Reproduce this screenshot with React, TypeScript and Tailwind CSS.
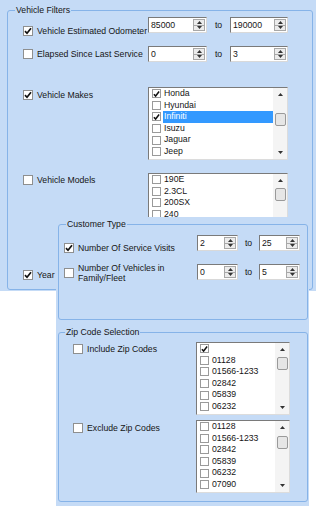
import React from 'react';

const BG = 'bg-[#c5dbf6]';

function Check({ on, small }: { on?: boolean; small?: boolean }) {
  return (
    <span
      className={
        small
          ? 'flex items-center justify-center shrink-0 w-[9px] h-[9px] bg-white border border-[#9a9a9a]'
          : 'flex items-center justify-center shrink-0 w-[10px] h-[10px] bg-white border border-[#8e8f8f]'
      }
    >
      {on && (
        <svg width="8" height="8" viewBox="0 0 8 8">
          <path d="M1 4.2 L3 6.3 L7 1.2" fill="none" stroke="#111" strokeWidth="1.7" />
        </svg>
      )}
    </span>
  );
}

function Tri({ up }: { up?: boolean }) {
  return (
    <svg width="5" height="3" viewBox="0 0 5 3">
      <path d={up ? 'M0 3 L2.5 0 L5 3 Z' : 'M0 0 L2.5 3 L5 0 Z'} fill="#333" />
    </svg>
  );
}

function Spin({ value, w }: { value: string; w: string }) {
  return (
    <div
      className={`flex h-[16px] bg-white border border-t-[#7a7a7a] border-l-[#7a7a7a] border-r-[#d9d9d9] border-b-[#d9d9d9] ${w}`}
    >
      <span className="flex-1 pl-[2px] leading-[14px]">{value}</span>
      <div className="flex flex-col w-[12px] my-[1px] mr-[1px]">
        <span className="flex-1 flex items-center justify-center bg-[#ececec] border border-[#a8a8a8]">
          <Tri up />
        </span>
        <span className="flex-1 flex items-center justify-center bg-[#ececec] border border-t-0 border-[#a8a8a8]">
          <Tri />
        </span>
      </div>
    </div>
  );
}

function ListBox({
  items,
  w,
  thumbTop,
  checked = [],
  selected = -1,
}: {
  items: string[];
  w: string;
  thumbTop: string;
  checked?: number[];
  selected?: number;
}) {
  return (
    <div
      className={`flex h-[73px] bg-white border border-t-[#7a7a7a] border-l-[#7a7a7a] border-r-[#dcdcdc] border-b-[#dcdcdc] overflow-hidden ${w}`}
    >
      <div className="flex-1 flex flex-col">
        {items.map((it, i) => (
          <div key={i} className="flex items-center h-[11.6px] pl-[3px] shrink-0">
            <Check small on={checked.includes(i)} />
            <span
              className={
                i === selected
                  ? 'flex-1 ml-[2px] pl-[1px] h-full leading-[11.6px] bg-[#3399ff] text-white'
                  : 'flex-1 ml-[2px] pl-[1px] h-full leading-[11.6px]'
              }
            >
              {it}
            </span>
          </div>
        ))}
      </div>
      <div className="flex flex-col items-center w-[14px] bg-[#f4f4f4]">
        <span className="h-[13px] flex items-center justify-center">
          <Tri up />
        </span>
        <span className={`w-[11px] h-[13px] rounded-[2px] border border-[#9a9a9a] bg-[#e6e6e6] ${thumbTop}`} />
        <span className="flex-1" />
        <span className="h-[13px] flex items-center justify-center">
          <Tri />
        </span>
      </div>
    </div>
  );
}

function Label({ on, children }: { on?: boolean; children: React.ReactNode }) {
  return (
    <div className="flex items-center gap-[4px]">
      <Check on={on} />
      <span className="leading-[10px]">{children}</span>
    </div>
  );
}

function Group({
  title,
  className,
  legend,
  children,
}: {
  title: string;
  className: string;
  legend: string;
  children: React.ReactNode;
}) {
  return (
    <div className={`relative border border-[#86b3e8] rounded-[3px] ${className}`}>
      <span className={`absolute -top-[7px] px-[1px] leading-[12px] ${BG} ${legend}`}>{title}</span>
      {children}
    </div>
  );
}

export default function App() {
  return (
    <div className="relative w-[321px] h-[506px] bg-white overflow-hidden text-[8.7px] text-[#151515] font-['Liberation_Sans',Arial,sans-serif]">
      {/* Vehicle filters */}
      <div className={`w-[316px] h-[291px] pt-[10px] pl-[7px] ${BG}`}>
        <Group title="Vehicle Filters" className="w-[306px] h-[280px]" legend="left-[7px]">
          <div className="pl-[15px] pt-[6px] flex flex-col">
            <div className="flex h-[29px]">
              <div className="w-[125px] mt-[9px]">
                <Label on>Vehicle Estimated Odometer</Label>
              </div>
              <Spin value="85000" w="w-[59px]" />
              <span className="w-[23px] text-center leading-[16px]">to</span>
              <Spin value="190000" w="w-[58px]" />
            </div>
            <div className="flex h-[41px]">
              <div className="w-[125px] mt-[3px]">
                <Label>Elapsed Since Last Service</Label>
              </div>
              <Spin value="0" w="w-[59px]" />
              <span className="w-[23px] text-center leading-[16px]">to</span>
              <Spin value="3" w="w-[58px]" />
            </div>
            <div className="flex h-[86px]">
              <div className="w-[125px] mt-[3px]">
                <Label on>Vehicle Makes</Label>
              </div>
              <ListBox
                w="w-[140px]"
                thumbTop="mt-[12px]"
                items={['Honda', 'Hyundai', 'Infiniti', 'Isuzu', 'Jaguar', 'Jeep']}
                checked={[0, 2]}
                selected={2}
              />
            </div>
            <div className="flex h-[90px]">
              <div className="w-[125px] mt-[2px]">
                <Label>Vehicle Models</Label>
              </div>
              <ListBox
                w="w-[140px]"
                thumbTop="mt-[1px]"
                items={['190E', '2.3CL', '200SX', '240', '300CE', '300E']}
              />
            </div>
            <div className="flex">
              <div className="w-[125px] mt-[7px]">
                <Label on>Year</Label>
              </div>
            </div>
          </div>
        </Group>
      </div>

      {/* Customer type panel */}
      <div className={`absolute left-[56px] top-[217px] w-[253px] h-[104px] pt-[7px] pl-[2px] ${BG}`}>
        <Group title="Customer Type" className="w-[250px] h-[96px]" legend="left-[7px]">
          <div className="pl-[5px] pt-[10px] flex flex-col">
            <div className="flex h-[29px]">
              <div className="w-[133px] mt-[8px]">
                <Label on>Number Of Service Visits</Label>
              </div>
              <Spin value="2" w="w-[41px]" />
              <span className="w-[21px] text-center leading-[16px]">to</span>
              <Spin value="25" w="w-[41px]" />
            </div>
            <div className="flex">
              <div className="w-[133px] mt-[-1px] flex items-center gap-[4px]">
                <Check />
                <span className="leading-[10px]">
                  Number Of Vehicles in
                  <br />
                  Family/Fleet
                </span>
              </div>
              <Spin value="0" w="w-[41px]" />
              <span className="w-[21px] text-center leading-[16px]">to</span>
              <Spin value="5" w="w-[41px]" />
            </div>
          </div>
        </Group>
      </div>

      {/* Zip code panel */}
      <div className={`absolute left-[56px] top-[321px] w-[253px] h-[185px] pt-[11px] pl-[2px] ${BG}`}>
        <Group title="Zip Code Selection" className="w-[250px] h-[170px]" legend="left-[6px]">
          <div className="pl-[14px] pt-[9px] flex flex-col">
            <div className="flex">
              <div className="w-[123px] mt-[2px]">
                <Label>Include Zip Codes</Label>
              </div>
              <ListBox
                w="w-[94px]"
                thumbTop="mt-[1px]"
                items={['', '01128', '01566-1233', '02842', '05839', '06232']}
                checked={[0]}
              />
            </div>
            <div className="flex mt-[5px]">
              <div className="w-[123px] mt-[3px]">
                <Label>Exclude Zip Codes</Label>
              </div>
              <ListBox
                w="w-[94px]"
                thumbTop="mt-[2px]"
                items={['01128', '01566-1233', '02842', '05839', '06232', '07090']}
              />
            </div>
          </div>
        </Group>
      </div>
    </div>
  );
}
